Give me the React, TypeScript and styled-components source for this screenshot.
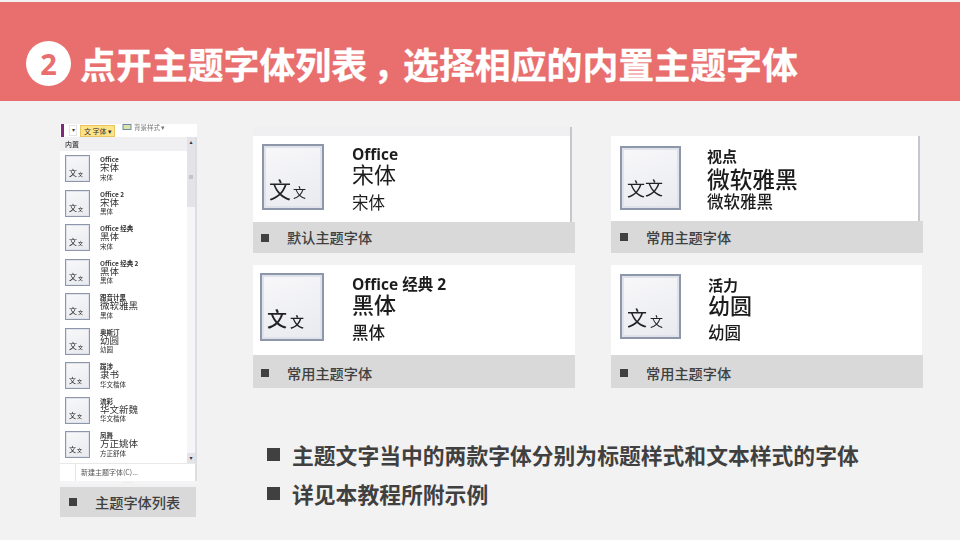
import React from "react";
import styled, { createGlobalStyle } from "styled-components";

const CJK = `"Noto Sans CJK SC", "Noto Sans", sans-serif`;

const Global = createGlobalStyle`
  html, body { margin: 0; padding: 0; background: #f2f2f2; }
  body { font-family: ${CJK}; }
`;

const Page = styled.div`
  width: 960px;
  height: 540px;
  overflow: hidden;
  background: #f2f2f2;
  padding-top: 2px;
  box-sizing: border-box;
`;

const Banner = styled.header`
  height: 99px;
  background: #e96e6e;
  display: flex;
  align-items: flex-end;
  padding: 0 0 15px 26px;
  box-sizing: border-box;
  gap: 9px;
`;

const Badge = styled.span`
  width: 45px;
  height: 45px;
  border-radius: 50%;
  background: #fff;
  color: #e96e6e;
  font: 700 29px/45px "Open Sans", sans-serif;
  text-align: center;
`;

const Title = styled.h1`
  margin: 0;
  font: 700 35.9px/45px ${CJK};
  color: #fff;
  white-space: nowrap;
  -webkit-text-stroke: 0.3px #fff;
`;

const Comma = styled.span`
  display: inline-block;
  margin: 0 -6px 0 6px;
`;

const Body = styled.main`
  display: flex;
  padding: 23px 0 0 60px;
  gap: 56px;
`;

const Side = styled.aside`
  width: 137px;
  display: flex;
  flex-direction: column;
`;

const Ribbon = styled.div`
  height: 13px;
  background: #fff;
  display: flex;
  align-items: center;
  gap: 3px;
  filter: blur(0.3px);
`;

const Accent = styled.span`
  width: 3px;
  height: 13px;
  margin-left: 1px;
  background: #7d2a78;
`;

const Arrow = styled.span`
  width: 8px;
  height: 11px;
  margin-left: 2px;
  border: 1px solid #e4e4e4;
  box-sizing: border-box;
  font: 6px/9px "Liberation Sans", sans-serif;
  text-align: center;
  color: #444;
`;

const FontButton = styled.span`
  width: 35px;
  height: 12px;
  background: #ffe389;
  border: 1px solid #e8c560;
  box-sizing: border-box;
  font: 7px/10px ${CJK};
  color: #333;
  padding-left: 3px;
  white-space: nowrap;
`;

const RibbonIcon = styled.svg`
  width: 10px;
  height: 6px;
  margin: -7px -1px 0 4px;
  flex: none;
`;

const RibbonLabel = styled.span`
  font: 6.5px/8px ${CJK};
  color: #777;
  margin-top: -7px;
  white-space: nowrap;
`;

const Menu = styled.div`
  height: 347px;
  background: #fff;
  box-sizing: border-box;
  display: flex;
  flex-direction: column;
  filter: blur(0.3px);
`;

const MenuMiddle = styled.div`
  display: flex;
  height: 326px;
  flex: none;
  border-right: 2px solid #dedee2;
`;

const MenuColumn = styled.div`
  flex: 1;
  display: flex;
  flex-direction: column;
  min-width: 0;
`;

const MenuHead = styled.div`
  height: 14px;
  flex: none;
  background: #f0f0f3;
  font: 500 7px/14px ${CJK};
  color: #444;
  padding-left: 5px;
`;

const MenuList = styled.div`
  padding: 4px 0 0 5px;
  display: flex;
  flex-direction: column;
`;

const MenuItem = styled.div`
  height: 34.5px;
  flex: none;
  display: flex;
  gap: 10px;
`;

const MenuText = styled.div`
  display: flex;
  flex-direction: column;
  color: #333;
  white-space: nowrap;
  margin-top: 1px;
`;

const MenuTitle = styled.span`
  font: 600 6.5px/7px ${CJK};
`;

const MenuMain = styled.span`
  font: 400 9.5px/9.5px ${CJK};
`;

const MenuSub = styled.span`
  font: 400 6.5px/8px ${CJK};
`;

const Thumb = styled.div<{ $w: number; $h: number; $pad: number; $bold?: boolean }>`
  width: ${(p) => p.$w}px;
  height: ${(p) => p.$h}px;
  flex: none;
  box-sizing: border-box;
  border: ${(p) => (p.$w > 40 ? 2 : 1)}px solid #8e96aa;
  box-shadow: inset 0 0 0 ${(p) => (p.$w > 40 ? 2 : 1)}px #dfe2ea;
  background: linear-gradient(160deg, #f8f8fa, #e9eaef);
  display: flex;
  align-items: flex-end;
  padding: 0 0 ${(p) => p.$pad}px ${(p) => (p.$w > 40 ? 5 : 3)}px;
  color: #222;
  font-weight: ${(p) => (p.$bold ? 500 : 400)};
`;

const BigGlyph = styled.span<{ $size: number }>`
  font-size: ${(p) => p.$size}px;
  line-height: 1;
`;

const SmallGlyph = styled.span<{ $size: number; $gap: number }>`
  font-size: ${(p) => p.$size}px;
  line-height: 1;
  margin-left: ${(p) => p.$gap}px;
  margin-bottom: 1px;
`;

const MiniBar = styled.div`
  width: 8px;
  flex: none;
  background: #f6f6f8;
  box-sizing: border-box;
  display: flex;
  flex-direction: column;
  justify-content: space-between;
  position: relative;
`;

const MiniStep = styled.span`
  height: 10px;
  background: #e2e4ea;
  color: #334;
  font: 6px/10px "DejaVu Sans", sans-serif;
  text-align: center;
`;

const MiniThumb = styled.span`
  position: absolute;
  top: 10px;
  left: 0;
  right: 0;
  height: 60px;
  background: #e4e4e8;
  &::after {
    content: "";
    position: absolute;
    top: 28px;
    left: 2px;
    right: 2px;
    height: 4px;
    background: #c4c4ca;
  }
`;

const MenuFoot = styled.div`
  height: 17px;
  flex: none;
  display: flex;
  border-top: 1px solid #e8e8e8;
  border-right: 2px solid #dedee2;
  font: 400 7px/16px ${CJK};
  color: #555;
  padding-left: 15px;
  white-space: nowrap;
`;

const FootLabel = styled.span`
  border-left: 1px solid #e4e4e4;
  padding-left: 5px;
`;

const Grip = styled.div`
  flex: 1;
  background: #f4f4f6;
  color: #aaa;
  font: 5px/3px "Liberation Sans", sans-serif;
  text-align: center;
  letter-spacing: 1px;
`;

const SideCaption = styled.div`
  margin-top: 3px;
  width: 136px;
  height: 30px;
  background: #d9d9d9;
  display: flex;
  align-items: center;
  padding-left: 9px;
  box-sizing: border-box;
  gap: 18px;
  font: 500 14.2px/30px ${CJK};
  color: #404040;
`;

const Square = styled.i<{ $size: number }>`
  display: block;
  width: ${(p) => p.$size}px;
  height: ${(p) => p.$size}px;
  flex: none;
  background: #404040;
`;

const Content = styled.section`
  display: flex;
  flex-direction: column;
  padding-top: 3px;
`;

const Cards = styled.div`
  display: grid;
  grid-template-columns: 322px 312px;
  column-gap: 36px;
  row-gap: 12px;
`;

const Card = styled.article`
  display: flex;
  flex-direction: column;
`;

const Shot = styled.div<{ $top: number; $height: number; $trim: number; $line?: boolean; $strip?: boolean; $gap: number; $left: number; $pt: number }>`
  margin-top: ${(p) => p.$top}px;
  margin-right: ${(p) => p.$trim}px;
  height: ${(p) => p.$height}px;
  background: ${(p) => (p.$strip ? "linear-gradient(#f0f0f3 9px, #fff 9px)" : "#fff")};
  border-right: ${(p) => (p.$line ? "2px solid #c6c6cc" : "none")};
  box-sizing: border-box;
  display: flex;
  gap: ${(p) => p.$gap}px;
  padding: ${(p) => p.$pt}px 0 0 ${(p) => p.$left}px;
  filter: blur(0.35px);
`;

const ShotText = styled.div<{ $mt: number }>`
  display: flex;
  flex-direction: column;
  margin-top: ${(p) => p.$mt}px;
  color: #1c1c1c;
  white-space: nowrap;
`;

const ShotTitle = styled.span<{ $size: number; $gap: number }>`
  font: 700 ${(p) => p.$size}px/15px "Open Sans", ${CJK};
  margin-bottom: ${(p) => p.$gap}px;
`;

const ShotMain = styled.span<{ $size: number; $light?: boolean }>`
  font: ${(p) => (p.$light ? 400 : 500)} ${(p) => p.$size}px/22px ${CJK};
`;

const ShotSub = styled.span<{ $gap: number; $light?: boolean }>`
  font: ${(p) => (p.$light ? 400 : 500)} 16.5px/20px ${CJK};
  margin-top: ${(p) => p.$gap}px;
`;

const Caption = styled.div<{ $h: number; $left: number; $pt: number }>`
  height: ${(p) => p.$h}px;
  background: #d9d9d9;
  display: flex;
  align-items: center;
  gap: 18px;
  padding: ${(p) => p.$pt}px 0 0 ${(p) => p.$left}px;
  box-sizing: border-box;
  font: 500 14.2px/1 ${CJK};
  color: #404040;
`;

const Notes = styled.ul`
  list-style: none;
  margin: 47px 0 0 14px;
  padding: 0;
  display: flex;
  flex-direction: column;
`;

const Note = styled.li`
  height: 39px;
  display: flex;
  align-items: center;
  gap: 12px;
  font: 700 21.8px/39px ${CJK};
  color: #404040;
  white-space: nowrap;
`;

const menuItems = [
  { t: "Office", m: "宋体", s: "宋体" },
  { t: "Office 2", m: "宋体", s: "黑体" },
  { t: "Office 经典", m: "黑体", s: "宋体" },
  { t: "Office 经典 2", m: "黑体", s: "黑体" },
  { t: "跟音计黑", m: "微软雅黑", s: "黑体" },
  { t: "奥斯汀", m: "幼圆", s: "幼圆" },
  { t: "跋涉", m: "隶书", s: "华文楷体", small: true },
  { t: "流彩", m: "华文新魏", s: "华文楷体", small: true },
  { t: "凤舞", m: "方正姚体", s: "方正舒体", small: true },
];

const cards = [
  { top: 0, height: 95, trim: 3, line: true, strip: true, light: true, gap: 28, left: 9, pt: 17, mt: 3, w: 62, h: 66, big: 22, small: 13, sgap: 2, pad: 9, title: "Office", ts: 15.5, tg: 0, main: "宋体", sub: "宋体", size: 22, sg: 8, cap: "默认主题字体", ch: 31, cl: 8, cp: 0 },
  { top: 9, height: 85, trim: 3, line: true, gap: 26, left: 9, pt: 10, mt: 3, w: 61, h: 64, big: 18, small: 18, sgap: 0, pad: 11, title: "视点", ts: 15, tg: 4, main: "微软雅黑", sub: "微软雅黑", size: 22.7, sg: 1, cap: "常用主题字体", ch: 32, cl: 9, cp: 0 },
  { top: 0, height: 90, trim: 0, gap: 28, left: 7, pt: 8, mt: 4, w: 64, h: 68, big: 20, small: 14, sgap: 3, pad: 10, bold: true, title: "Office 经典 2", ts: 15.5, tg: 0, main: "黑体", sub: "黑体", size: 22, sg: 8, cap: "常用主题字体", ch: 33, cl: 8, cp: 3 },
  { top: 0, height: 90, trim: 1, gap: 27, left: 9, pt: 9, mt: 4, w: 61, h: 65, big: 20, small: 13, sgap: 3, pad: 9, title: "活力", ts: 15, tg: 0, main: "幼圆", sub: "幼圆", size: 22, sg: 7, cap: "常用主题字体", ch: 33, cl: 9, cp: 3 },
];

export default function App() {
  return (
    <Page>
      <Global />
      <Banner>
        <Badge>2</Badge>
        <Title>
          点开主题字体列表<Comma>，</Comma>选择相应的内置主题字体
        </Title>
      </Banner>
      <Body>
        <Side>
          <Ribbon>
            <Accent />
            <Arrow>▾</Arrow>
            <FontButton>文 字体 ▾</FontButton>
            <RibbonIcon viewBox="0 0 10 6">
              <rect x="1" y="0.5" width="8" height="5" fill="#d9e6a8" stroke="#6f88a8" />
            </RibbonIcon>
            <RibbonLabel>背景样式 ▾</RibbonLabel>
          </Ribbon>
          <Menu>
            <MenuMiddle>
              <MenuColumn>
                <MenuHead>内置</MenuHead>
                <MenuList>
                  {menuItems.map((it, i) => (
                    <MenuItem key={i}>
                      <Thumb $w={25} $h={27} $pad={4}>
                        <BigGlyph $size={it.small ? 7 : 8}>文</BigGlyph>
                        <SmallGlyph $size={5} $gap={1}>文</SmallGlyph>
                      </Thumb>
                      <MenuText>
                        <MenuTitle>{it.t}</MenuTitle>
                        <MenuMain>{it.m}</MenuMain>
                        <MenuSub>{it.s}</MenuSub>
                      </MenuText>
                    </MenuItem>
                  ))}
                </MenuList>
              </MenuColumn>
              <MiniBar>
                <MiniStep>▴</MiniStep>
                <MiniThumb />
                <MiniStep>▾</MiniStep>
              </MiniBar>
            </MenuMiddle>
            <MenuFoot>
              <FootLabel>新建主题字体(C)...</FootLabel>
            </MenuFoot>
            <Grip>····</Grip>
          </Menu>
          <SideCaption>
            <Square $size={8} />
            主题字体列表
          </SideCaption>
        </Side>
        <Content>
          <Cards>
            {cards.map((c, i) => (
              <Card key={i}>
                <Shot $top={c.top} $height={c.height} $trim={c.trim} $line={c.line} $strip={c.strip} $gap={c.gap} $left={c.left} $pt={c.pt}>
                  <Thumb $w={c.w} $h={c.h} $pad={c.pad} $bold={c.bold}>
                    <BigGlyph $size={c.big}>文</BigGlyph>
                    <SmallGlyph $size={c.small} $gap={c.sgap}>文</SmallGlyph>
                  </Thumb>
                  <ShotText $mt={c.mt}>
                    <ShotTitle $size={c.ts} $gap={c.tg}>{c.title}</ShotTitle>
                    <ShotMain $size={c.size} $light={c.light}>{c.main}</ShotMain>
                    <ShotSub $gap={c.sg} $light={c.light}>{c.sub}</ShotSub>
                  </ShotText>
                </Shot>
                <Caption $h={c.ch} $left={c.cl} $pt={c.cp}>
                  <Square $size={8} />
                  {c.cap}
                </Caption>
              </Card>
            ))}
          </Cards>
          <Notes>
            <Note>
              <Square $size={13} />
              主题文字当中的两款字体分别为标题样式和文本样式的字体
            </Note>
            <Note>
              <Square $size={13} />
              详见本教程所附示例
            </Note>
          </Notes>
        </Content>
      </Body>
    </Page>
  );
}
